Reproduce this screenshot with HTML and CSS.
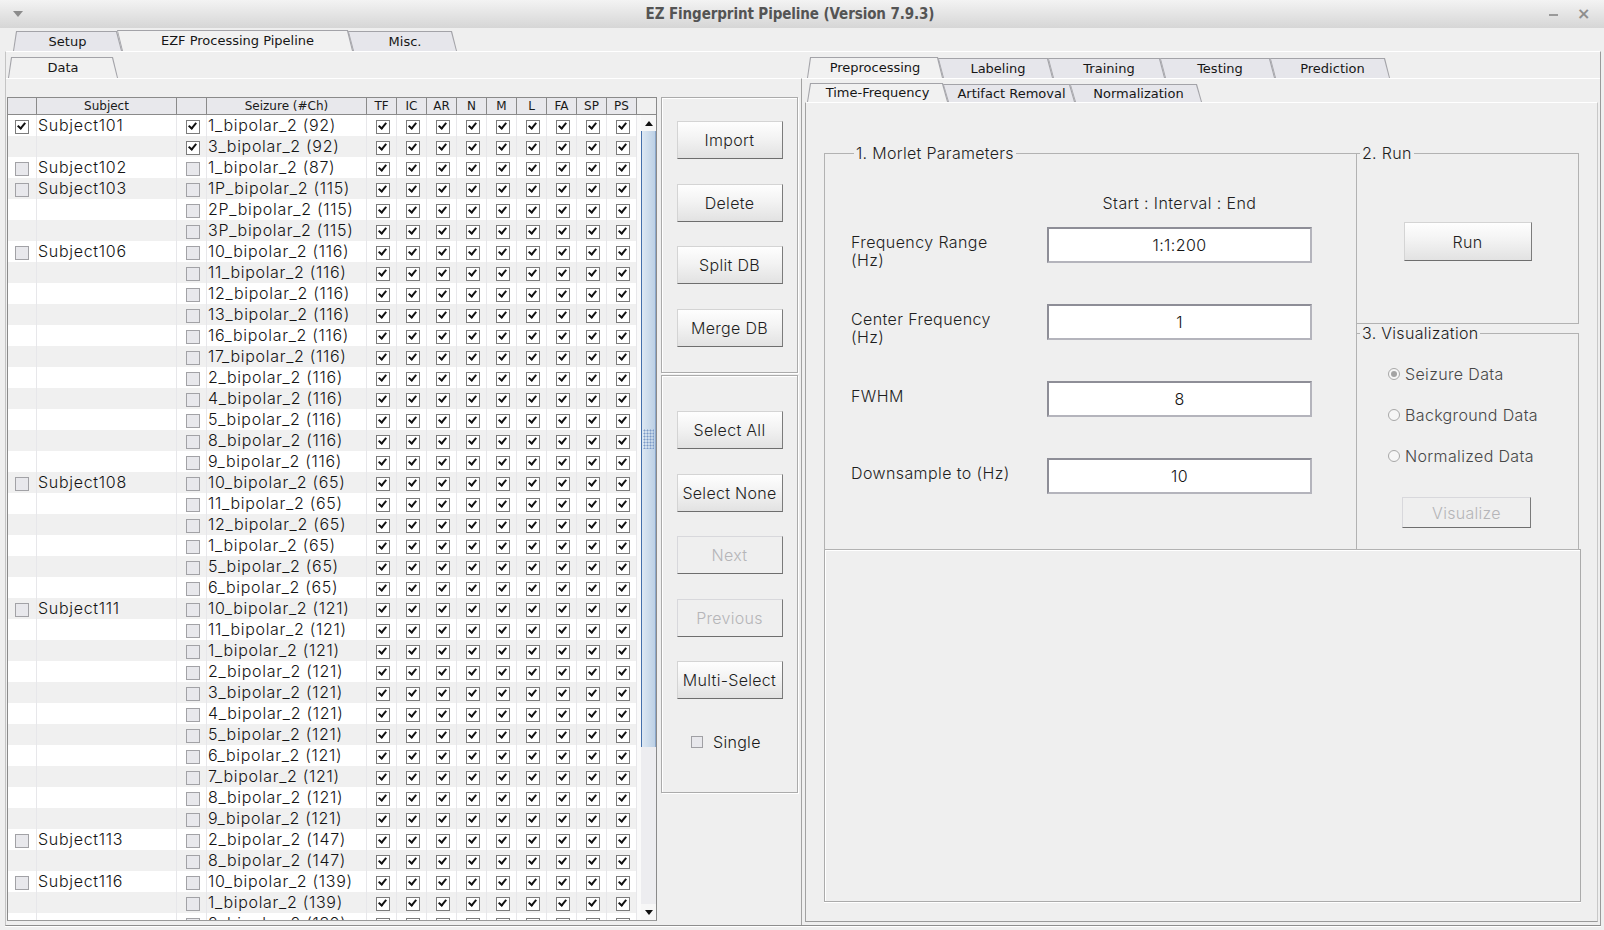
FILE: index.html
```html
<!DOCTYPE html>
<html lang="en">
<head>
<meta charset="utf-8">
<title>EZ Fingerprint Pipeline (Version 7.9.3)</title>
<link rel="stylesheet" href="styles.css">
</head>
<body>
<div class="window">
  <header class="titlebar">
    <span class="tb-menu"><span class="tb-arrow"></span></span>
    <span class="tb-title">EZ Fingerprint Pipeline (Version 7.9.3)</span>
    <span class="tb-ctrls"><span class="tb-min"></span><span class="tb-close">×</span></span>
  </header>
  <div class="main">
    <nav class="tabs top-tabs">
      <div class="tab first w-setup">Setup</div>
      <div class="tab sel w-ezf">EZF Processing Pipeline</div>
      <div class="tab w-misc">Misc.</div>
    </nav>
    <div class="main-pane">
      <section class="left-pane">
        <nav class="tabs data-tabs">
          <div class="tab first sel w-data">Data</div>
        </nav>
        <div class="data-body">
          <div class="table-wrap">
            <div class="thead">
              <span></span><span>Subject</span><span></span><span>Seizure (#Ch)</span><span>TF</span><span>IC</span><span>AR</span><span>N</span><span>M</span><span>L</span><span>FA</span><span>SP</span><span>PS</span><span class="corner"></span>
            </div>
            <div class="tbody-wrap">
              <div class="tbody">
                <div class="tr"><i></i><span>Subject101</span><i></i><span>1_bipolar_2 (92)</span><i></i><i></i><i></i><i></i><i></i><i></i><i></i><i></i><i></i></div>
                <div class="tr"><span></span><span></span><i></i><span>3_bipolar_2 (92)</span><i></i><i></i><i></i><i></i><i></i><i></i><i></i><i></i><i></i></div>
                <div class="tr"><i class="u"></i><span>Subject102</span><i class="u"></i><span>1_bipolar_2 (87)</span><i></i><i></i><i></i><i></i><i></i><i></i><i></i><i></i><i></i></div>
                <div class="tr"><i class="u"></i><span>Subject103</span><i class="u"></i><span>1P_bipolar_2 (115)</span><i></i><i></i><i></i><i></i><i></i><i></i><i></i><i></i><i></i></div>
                <div class="tr"><span></span><span></span><i class="u"></i><span>2P_bipolar_2 (115)</span><i></i><i></i><i></i><i></i><i></i><i></i><i></i><i></i><i></i></div>
                <div class="tr"><span></span><span></span><i class="u"></i><span>3P_bipolar_2 (115)</span><i></i><i></i><i></i><i></i><i></i><i></i><i></i><i></i><i></i></div>
                <div class="tr"><i class="u"></i><span>Subject106</span><i class="u"></i><span>10_bipolar_2 (116)</span><i></i><i></i><i></i><i></i><i></i><i></i><i></i><i></i><i></i></div>
                <div class="tr"><span></span><span></span><i class="u"></i><span>11_bipolar_2 (116)</span><i></i><i></i><i></i><i></i><i></i><i></i><i></i><i></i><i></i></div>
                <div class="tr"><span></span><span></span><i class="u"></i><span>12_bipolar_2 (116)</span><i></i><i></i><i></i><i></i><i></i><i></i><i></i><i></i><i></i></div>
                <div class="tr"><span></span><span></span><i class="u"></i><span>13_bipolar_2 (116)</span><i></i><i></i><i></i><i></i><i></i><i></i><i></i><i></i><i></i></div>
                <div class="tr"><span></span><span></span><i class="u"></i><span>16_bipolar_2 (116)</span><i></i><i></i><i></i><i></i><i></i><i></i><i></i><i></i><i></i></div>
                <div class="tr"><span></span><span></span><i class="u"></i><span>17_bipolar_2 (116)</span><i></i><i></i><i></i><i></i><i></i><i></i><i></i><i></i><i></i></div>
                <div class="tr"><span></span><span></span><i class="u"></i><span>2_bipolar_2 (116)</span><i></i><i></i><i></i><i></i><i></i><i></i><i></i><i></i><i></i></div>
                <div class="tr"><span></span><span></span><i class="u"></i><span>4_bipolar_2 (116)</span><i></i><i></i><i></i><i></i><i></i><i></i><i></i><i></i><i></i></div>
                <div class="tr"><span></span><span></span><i class="u"></i><span>5_bipolar_2 (116)</span><i></i><i></i><i></i><i></i><i></i><i></i><i></i><i></i><i></i></div>
                <div class="tr"><span></span><span></span><i class="u"></i><span>8_bipolar_2 (116)</span><i></i><i></i><i></i><i></i><i></i><i></i><i></i><i></i><i></i></div>
                <div class="tr"><span></span><span></span><i class="u"></i><span>9_bipolar_2 (116)</span><i></i><i></i><i></i><i></i><i></i><i></i><i></i><i></i><i></i></div>
                <div class="tr"><i class="u"></i><span>Subject108</span><i class="u"></i><span>10_bipolar_2 (65)</span><i></i><i></i><i></i><i></i><i></i><i></i><i></i><i></i><i></i></div>
                <div class="tr"><span></span><span></span><i class="u"></i><span>11_bipolar_2 (65)</span><i></i><i></i><i></i><i></i><i></i><i></i><i></i><i></i><i></i></div>
                <div class="tr"><span></span><span></span><i class="u"></i><span>12_bipolar_2 (65)</span><i></i><i></i><i></i><i></i><i></i><i></i><i></i><i></i><i></i></div>
                <div class="tr"><span></span><span></span><i class="u"></i><span>1_bipolar_2 (65)</span><i></i><i></i><i></i><i></i><i></i><i></i><i></i><i></i><i></i></div>
                <div class="tr"><span></span><span></span><i class="u"></i><span>5_bipolar_2 (65)</span><i></i><i></i><i></i><i></i><i></i><i></i><i></i><i></i><i></i></div>
                <div class="tr"><span></span><span></span><i class="u"></i><span>6_bipolar_2 (65)</span><i></i><i></i><i></i><i></i><i></i><i></i><i></i><i></i><i></i></div>
                <div class="tr"><i class="u"></i><span>Subject111</span><i class="u"></i><span>10_bipolar_2 (121)</span><i></i><i></i><i></i><i></i><i></i><i></i><i></i><i></i><i></i></div>
                <div class="tr"><span></span><span></span><i class="u"></i><span>11_bipolar_2 (121)</span><i></i><i></i><i></i><i></i><i></i><i></i><i></i><i></i><i></i></div>
                <div class="tr"><span></span><span></span><i class="u"></i><span>1_bipolar_2 (121)</span><i></i><i></i><i></i><i></i><i></i><i></i><i></i><i></i><i></i></div>
                <div class="tr"><span></span><span></span><i class="u"></i><span>2_bipolar_2 (121)</span><i></i><i></i><i></i><i></i><i></i><i></i><i></i><i></i><i></i></div>
                <div class="tr"><span></span><span></span><i class="u"></i><span>3_bipolar_2 (121)</span><i></i><i></i><i></i><i></i><i></i><i></i><i></i><i></i><i></i></div>
                <div class="tr"><span></span><span></span><i class="u"></i><span>4_bipolar_2 (121)</span><i></i><i></i><i></i><i></i><i></i><i></i><i></i><i></i><i></i></div>
                <div class="tr"><span></span><span></span><i class="u"></i><span>5_bipolar_2 (121)</span><i></i><i></i><i></i><i></i><i></i><i></i><i></i><i></i><i></i></div>
                <div class="tr"><span></span><span></span><i class="u"></i><span>6_bipolar_2 (121)</span><i></i><i></i><i></i><i></i><i></i><i></i><i></i><i></i><i></i></div>
                <div class="tr"><span></span><span></span><i class="u"></i><span>7_bipolar_2 (121)</span><i></i><i></i><i></i><i></i><i></i><i></i><i></i><i></i><i></i></div>
                <div class="tr"><span></span><span></span><i class="u"></i><span>8_bipolar_2 (121)</span><i></i><i></i><i></i><i></i><i></i><i></i><i></i><i></i><i></i></div>
                <div class="tr"><span></span><span></span><i class="u"></i><span>9_bipolar_2 (121)</span><i></i><i></i><i></i><i></i><i></i><i></i><i></i><i></i><i></i></div>
                <div class="tr"><i class="u"></i><span>Subject113</span><i class="u"></i><span>2_bipolar_2 (147)</span><i></i><i></i><i></i><i></i><i></i><i></i><i></i><i></i><i></i></div>
                <div class="tr"><span></span><span></span><i class="u"></i><span>8_bipolar_2 (147)</span><i></i><i></i><i></i><i></i><i></i><i></i><i></i><i></i><i></i></div>
                <div class="tr"><i class="u"></i><span>Subject116</span><i class="u"></i><span>10_bipolar_2 (139)</span><i></i><i></i><i></i><i></i><i></i><i></i><i></i><i></i><i></i></div>
                <div class="tr"><span></span><span></span><i class="u"></i><span>1_bipolar_2 (139)</span><i></i><i></i><i></i><i></i><i></i><i></i><i></i><i></i><i></i></div>
                <div class="tr"><span></span><span></span><i class="u"></i><span>2_bipolar_2 (139)</span><i></i><i></i><i></i><i></i><i></i><i></i><i></i><i></i><i></i></div>
              </div>
              <div class="vscroll">
                <div class="sb-btn"><span class="arr-up"></span></div>
                <div class="sb-thumb"><span class="grip"></span></div>
                <div class="sb-track"></div>
                <div class="sb-btn"><span class="arr-down"></span></div>
              </div>
            </div>
          </div>
          <div class="btn-col">
            <div class="group g1">
              <button class="btn">Import</button>
              <button class="btn">Delete</button>
              <button class="btn">Split DB</button>
              <button class="btn">Merge DB</button>
            </div>
            <div class="group g2">
              <button class="btn">Select All</button>
              <button class="btn">Select None</button>
              <button class="btn dis">Next</button>
              <button class="btn dis">Previous</button>
              <button class="btn">Multi-Select</button>
              <label class="single"><span class="ucb"></span>Single</label>
            </div>
          </div>
        </div>
      </section>
      <section class="right-pane">
        <nav class="tabs r-tabs">
          <div class="tab first sel w-pre">Preprocessing</div>
          <div class="tab w-lab">Labeling</div>
          <div class="tab w-tra">Training</div>
          <div class="tab w-tes">Testing</div>
          <div class="tab w-pred">Prediction</div>
        </nav>
        <div class="pp-pane">
          <nav class="tabs sub-tabs">
            <div class="tab first sel w-tf">Time-Frequency</div>
            <div class="tab w-ar">Artifact Removal</div>
            <div class="tab w-norm">Normalization</div>
          </nav>
          <div class="tf-pane">
            <div class="tf-top">
              <fieldset class="fs morlet">
                <legend>1. Morlet Parameters</legend>
                <div class="mp-head">Start : Interval : End</div>
                <div class="mp-grid">
                  <div class="mp-label">Frequency Range<br>(Hz)</div>
                  <div class="field">1:1:200</div>
                  <div class="mp-label">Center Frequency<br>(Hz)</div>
                  <div class="field">1</div>
                  <div class="mp-label">FWHM</div>
                  <div class="field">8</div>
                  <div class="mp-label">Downsample to (Hz)</div>
                  <div class="field">10</div>
                </div>
              </fieldset>
              <div class="side">
                <fieldset class="fs run">
                  <legend>2. Run</legend>
                  <button class="btn run-btn">Run</button>
                </fieldset>
                <fieldset class="fs viz">
                  <legend>3. Visualization</legend>
                  <div class="radios">
                    <label class="radio"><span class="rb on"></span>Seizure Data</label>
                    <label class="radio"><span class="rb"></span>Background Data</label>
                    <label class="radio"><span class="rb"></span>Normalized Data</label>
                  </div>
                  <button class="btn dis viz-btn">Visualize</button>
                </fieldset>
              </div>
            </div>
            <div class="plot-box"></div>
          </div>
        </div>
      </section>
    </div>
  </div>
</div>
</body>
</html>
```

FILE: styles.css
```css
* { box-sizing: border-box; }
html, body { margin: 0; padding: 0; }
body {
  width: 1604px;
  height: 930px;
  overflow: hidden;
  background: #dcdcdc;
  font-family: Inter, "DejaVu Sans", sans-serif;
  font-weight: 300;
  color: #1c1c1c;
}
.window {
  width: 1604px;
  height: 930px;
  display: flex;
  flex-direction: column;
  background: #efefef;
}

/* ---------- title bar ---------- */
.titlebar {
  height: 28px;
  flex: none;
  display: flex;
  align-items: center;
  background: linear-gradient(#f3f3f3, #d6d6d6);
}
.tb-menu { width: 36px; display: flex; justify-content: center; }
.tb-arrow {
  width: 0; height: 0;
  border-left: 5px solid transparent;
  border-right: 5px solid transparent;
  border-top: 6px solid #8c8c8c;
}
.tb-title {
  flex: 1;
  text-align: center;
  font: bold 15px "DejaVu Sans Condensed", "DejaVu Sans", sans-serif;
  letter-spacing: -0.1px;
  color: #545454;
}
.tb-ctrls { width: 60px; display: flex; align-items: center; gap: 19px; padding-left: 5px; }
.tb-min { width: 9px; height: 2px; background: #9a9a9a; margin-top: 1px; }
.tb-close { font: bold 16px "DejaVu Sans", sans-serif; color: #8e8e8e; line-height: 16px; }

/* ---------- tabs ---------- */
.tabs { display: flex; height: 20px; flex: none; }
.tab {
  position: relative;
  z-index: 0;
  height: 20px;
  margin-left: -5px;
  padding-left: 5px;
  display: flex;
  align-items: center;
  justify-content: center;
  font: 13px "DejaVu Sans", sans-serif;
  color: #161616;
}
.tab::before, .tab::after {
  content: "";
  position: absolute;
  clip-path: polygon(0 0, calc(100% - 5px) 0, 100% 100%, 5px 100%);
}
.tab::before { inset: 0; z-index: -2; background: #a3a3a8; }
.tab::after { inset: 1px 1px 0 1px; z-index: -1; background: #e6e6eb; }
.tab.first { margin-left: 0; padding-left: 0; }
.tab.first::before, .tab.first::after { clip-path: polygon(3px 0, calc(100% - 5px) 0, 100% 100%, 0 100%); }
.tab.sel::after { background: #f1f1f1; }
.tab.sel { height: 21px; margin-top: -1px; margin-bottom: -1px; }

.top-tabs { padding-left: 8px; margin-top: 3px; }
.w-setup { width: 109px; }
.w-ezf { width: 236px; }
.w-misc { width: 109px; }
.w-data { width: 110px; }
.w-pre { width: 136px; }
.w-lab { width: 115px; }
.w-tra { width: 117px; }
.w-tes { width: 115px; }
.w-pred { width: 120px; }
.w-tf { width: 141px; }
.w-ar { width: 132px; }
.w-norm { width: 132px; }
.sub-tabs { height: 18px; padding-left: 2px; }
.sub-tabs .tab { height: 18px; }
.sub-tabs .tab.sel { height: 19px; }

/* ---------- main pane ---------- */
.main { flex: 1; padding: 0 3px 4px 5px; display: flex; flex-direction: column; }
.main-pane {
  flex: 1;
  display: flex;
  border-top: 1px solid #ffffff;
  border-left: 1px solid #c4c4c4;
  border-right: 1px solid #9a9a9a;
  border-bottom: 1px solid #8e8e8e;
  box-shadow: 0 1px 0 #ffffff;
}

/* ---------- left pane ---------- */
.left-pane { width: 795px; display: flex; flex-direction: column; padding-top: 6px; }
.data-tabs { padding-left: 2px; }
.data-body {
  flex: 1;
  display: flex;
  align-items: flex-start;
  border-top: 1px solid #ffffff;
  padding-left: 1px;
}
.table-wrap {
  margin-top: 18px;
  width: 650px;
  border-left: 1px solid #8a8a8a;
  border-right: 1px solid #8a8a8a;
  border-bottom: 1px solid #9a9a9a;
}
.thead {
  display: grid;
  grid-template-columns: 29px 140px 30px 160px repeat(9, 30px) 19px;
  height: 18px;
  border-top: 1px solid #8a8a8a;
  border-bottom: 1px solid #8a8a8a;
  background: #e8e8ec;
  font: 12px "DejaVu Sans", sans-serif;
  color: #1a1a1a;
}
.thead span { border-right: 1px solid #8a8a8a; text-align: center; line-height: 16px; }
.thead span.corner { border-right: none; background: #f0f0f0; }

.tbody-wrap { display: flex; height: 805px; }
.tbody { width: 629px; height: 805px; overflow: hidden; background: #fff; }
.tr {
  display: grid;
  grid-template-columns: 29px 140px 30px 160px repeat(9, 30px);
  height: 21px;
  background: #ffffff;
  font-size: 16px;
  line-height: 21px;
  letter-spacing: 0.7px;
  color: #141414;
}
.tr:nth-child(even) { background: #f0f0f0; }
.tr > span, .tr > i { border-right: 1px solid #e7e7ea; white-space: nowrap; overflow: hidden; }
.tr > span { padding-left: 1px; }
.tr > i { position: relative; display: block; }
.tr > i:first-child { padding-right: 3px; }
.tr > i::before {
  content: "";
  position: absolute;
  left: 50%; top: 50%;
  width: 12px; height: 12px;
  margin: -6px 0 0 -6px;
  border: 1px solid #7b7b7b;
  background: #ffffff;
}
.tr > i:first-child::before, .tr > i:first-child::after { left: 46%; }
.tr > i::after {
  content: "";
  position: absolute;
  left: 50%; top: 50%;
  width: 3px; height: 6px;
  margin: -5px 0 0 -2px;
  border: solid #111111;
  border-width: 0 2px 2px 0;
  transform: rotate(40deg);
}
.tr > i.u::before { background: #e8e8ec; border-color: #a2a2a6; }
.tr > i.u::after { display: none; }

/* scrollbar */
.vscroll {
  width: 19px;
  display: flex;
  flex-direction: column;
  background: #ededf0;
  border-left: 4px solid #fafafa;
}
.sb-btn { height: 16px; flex: none; display: flex; align-items: center; justify-content: center; background: #f7f7f7; }
.arr-up { width: 0; height: 0; border-left: 4px solid transparent; border-right: 4px solid transparent; border-bottom: 5px solid #111; }
.arr-down { width: 0; height: 0; border-left: 4px solid transparent; border-right: 4px solid transparent; border-top: 5px solid #111; }
.sb-thumb {
  height: 616px;
  flex: none;
  display: flex;
  align-items: center;
  justify-content: center;
  border-left: 1px solid #4570ab;
  border-right: 1px solid #8aa6c9;
  background: linear-gradient(90deg, #dde8f3, #bcd0e5);
}
.grip {
  width: 11px; height: 20px;
  background-image: radial-gradient(circle, #7d9bc8 0.9px, transparent 1.1px);
  background-size: 3px 3px;
}
.sb-track { flex: 1; }

/* middle button column */
.btn-col { width: 137px; margin: 18px 0 0 4px; display: flex; flex-direction: column; gap: 2px; }
.group {
  display: flex;
  flex-direction: column;
  align-items: center;
  border: 1px solid #ababab;
  box-shadow: inset 1px 1px 0 #ffffff, 1px 1px 0 #ffffff;
}
.g1 { height: 276px; padding-top: 23px; gap: 24.7px; }
.g2 { height: 418px; padding-top: 35px; gap: 24.6px; }
.btn {
  width: 106px;
  height: 38px;
  flex: none;
  padding: 0;
  border: 1px solid;
  border-color: #d4d4d4 #7c7c7c #6e6e6e #d4d4d4;
  background: linear-gradient(#fefefe, #f3f3f3 45%, #e2e2e2);
  font: 300 16px Inter, "DejaVu Sans", sans-serif;
  letter-spacing: 0.3px;
  color: #1f1f1f;
}
.btn.dis { background: #efefef; color: #b5b5b8; border-color: #d8d8dc #7a7a7a #6e6e6e #d8d8dc; }
.single {
  align-self: flex-start;
  margin: 8px 0 0 29px;
  display: flex;
  align-items: center;
  gap: 10px;
  font-size: 16px;
  letter-spacing: 0.3px;
  color: #1a1a1a;
  height: 20px;
}
.ucb { width: 12px; height: 12px; border: 1px solid #a0a0a4; background: #e8e8ec; }

/* ---------- right pane ---------- */
.right-pane { flex: 1; display: flex; flex-direction: column; padding-top: 6px; }
.r-tabs { padding-left: 6px; }
.pp-pane {
  flex: 1;
  display: flex;
  flex-direction: column;
  border-top: 1px solid #ffffff;
  border-left: 1px solid #a2a2a2;
  padding: 5px 2px 3px 3px;
}
.tf-pane {
  flex: 1;
  border-top: 1px solid #ffffff;
  border-left: 1px solid #a2a2a2;
  border-right: 1px solid #c8c8c8;
  border-bottom: 1px solid #9a9a9a;
  padding: 41px 16px 0 18px;
}
.tf-top { display: flex; height: 405.5px; }
.fs {
  margin: 0;
  padding: 0;
  border: 1px solid #b2b2b2;
  min-width: 0;
}
.fs legend {
  margin-left: 3px;
  padding: 0 2px;
  font-size: 16px;
  line-height: 19px;
  letter-spacing: 0.3px;
  color: #1e1e1e;
}
.morlet { width: 533px; height: 405.5px; padding: 31px 0 0 26px; font-size: 16px; line-height: 18px; letter-spacing: 0.4px; color: #1e1e1e; }
.mp-head {
  margin-left: 196px;
  width: 265px;
  text-align: center;
  height: 18px;
  margin-bottom: 14.5px;
}
.mp-grid {
  display: grid;
  grid-template-columns: 196px 265px;
  grid-auto-rows: 36px;
  row-gap: 41px;
}
.mp-label { padding-top: 6px; white-space: nowrap; }
.field {
  height: 36px;
  border: 2px solid;
  border-color: #8e8e97 #b4b4bc #b4b4bc #8e8e97;
  background: #ffffff;
  text-align: center;
  line-height: 32px;
  color: #141414;
}
.side { width: 223px; margin-left: -1px; display: flex; flex-direction: column; }
.run { height: 180px; display: flex; flex-direction: column; align-items: center; }
.run-btn { width: 128px; height: 39px; margin-top: 59px; }
.viz { height: 225.5px; display: flex; flex-direction: column; }
.radios { display: flex; flex-direction: column; gap: 21px; padding: 21px 0 0 31px; }
.radio { display: flex; align-items: center; gap: 5px; height: 20px; font-size: 16px; letter-spacing: 0.35px; color: #474747; }
.rb {
  width: 12px; height: 12px;
  border-radius: 50%;
  border: 1px solid #a8a8a8;
  background: #f6f6f6;
  display: flex;
  align-items: center;
  justify-content: center;
}
.rb.on::after { content: ""; width: 6px; height: 6px; border-radius: 50%; background: #a3a3a3; }
.viz-btn { width: 129px; height: 31px; margin: 31px 0 0 45px; }
.plot-box {
  height: 353px;
  margin-top: -1px;
  border: 1px solid #ababab;
  box-shadow: inset 1px 1px 0 #ffffff, 0 1px 0 #ffffff;
}
```
